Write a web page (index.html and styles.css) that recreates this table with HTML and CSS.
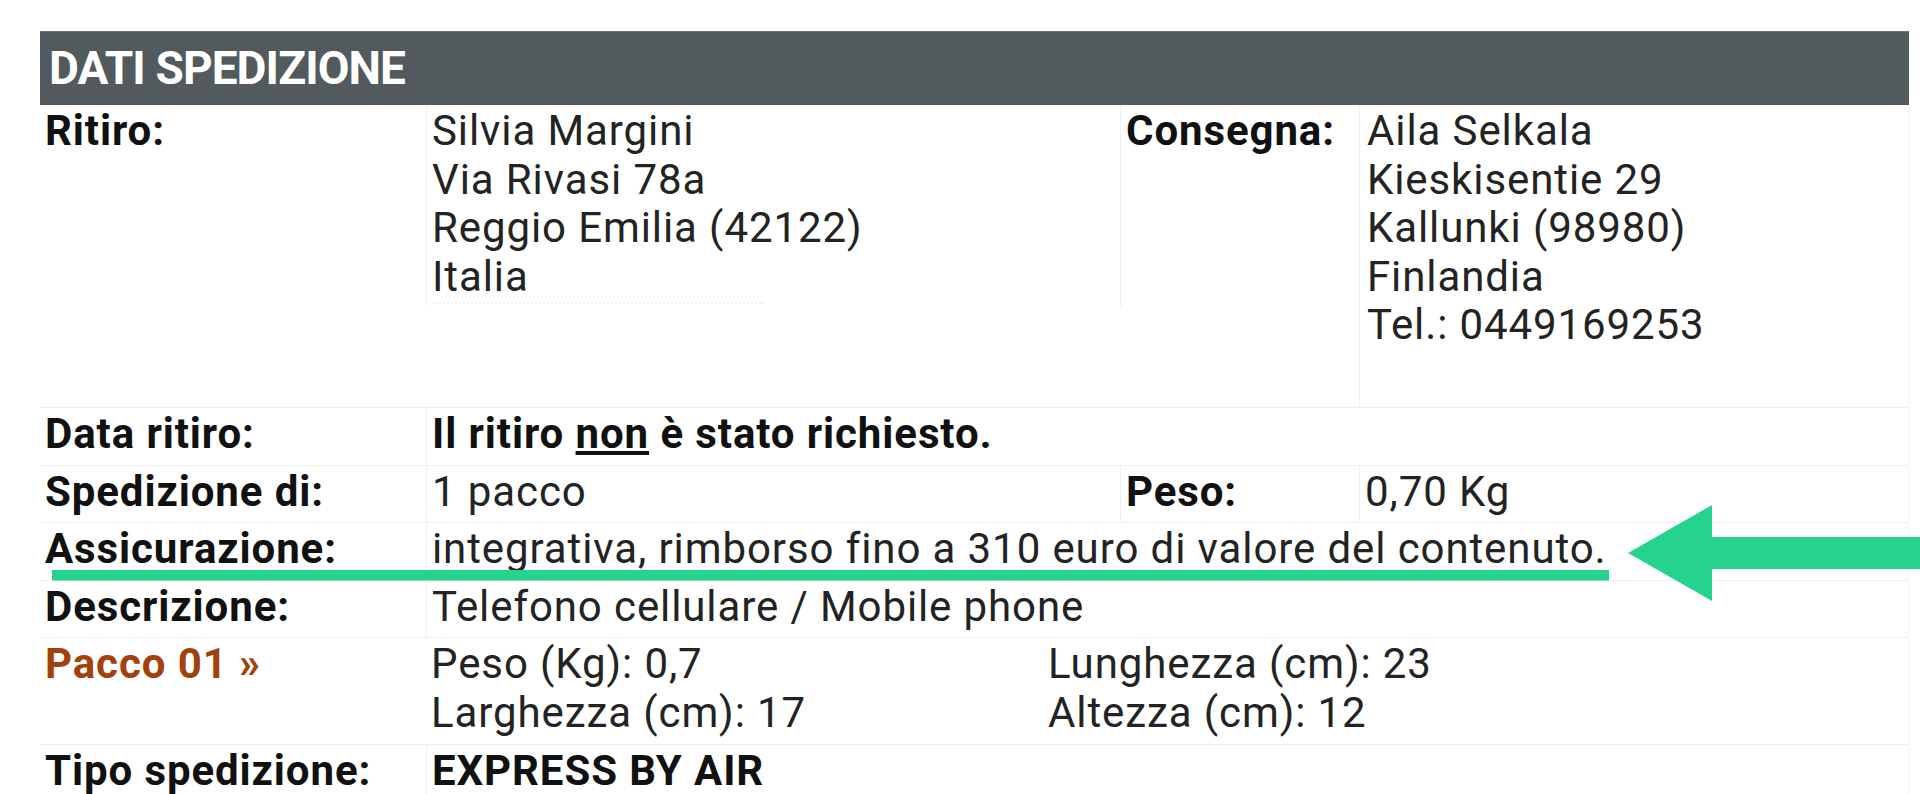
FILE: index.html
```html
<!DOCTYPE html>
<html lang="it">
<head>
<meta charset="utf-8">
<title>Dati spedizione</title>
<link rel="stylesheet" href="styles.css">
</head>
<body>
<div class="page">
  <section class="sheet">
    <h2 class="sheet-head">DATI SPEDIZIONE</h2>

    <div class="row row-addr">
      <div class="cell label span2">Ritiro:</div>
      <div class="cell value bl">
        Silvia Margini<br>
        Via Rivasi 78a<br>
        Reggio Emilia (42122)<br>
        Italia
        <span class="addr-foot"></span>
      </div>
      <div class="cell label bl">Consegna:</div>
      <div class="cell value bl span2 addr-right">
        Aila Selkala<br>
        Kieskisentie 29<br>
        Kallunki (98980)<br>
        Finlandia<br>
        Tel.: 0449169253
      </div>
    </div>

    <div class="row">
      <div class="cell label">Data ritiro:</div>
      <div class="cell value bl wide strong">Il ritiro <u>non</u> è stato richiesto.</div>
    </div>

    <div class="row">
      <div class="cell label">Spedizione di:</div>
      <div class="cell value bl">1 pacco</div>
      <div class="cell label bl">Peso:</div>
      <div class="cell value bl pad-r">0,70 Kg</div>
    </div>

    <div class="row">
      <div class="cell label">Assicurazione:</div>
      <div class="cell value bl wide">integrativa, rimborso fino a 310 euro di valore del contenuto.</div>
    </div>

    <div class="row">
      <div class="cell label">Descrizione:</div>
      <div class="cell value bl wide">Telefono cellulare / Mobile phone</div>
    </div>

    <div class="row">
      <div class="cell label pacco">Pacco 01 »</div>
      <div class="cell value wide">
        <div class="dims">
          <span>Peso (Kg): 0,7</span>
          <span>Lunghezza (cm): 23</span>
          <span>Larghezza (cm): 17</span>
          <span>Altezza (cm): 12</span>
        </div>
      </div>
    </div>

    <div class="row">
      <div class="cell label">Tipo spedizione:</div>
      <div class="cell value bl wide strong">EXPRESS BY AIR</div>
    </div>
  </section>

  <svg class="annot" width="1920" height="794" viewBox="0 0 1920 794" aria-hidden="true">
    <rect x="52" y="570" width="1557" height="10.5" fill="#26d38e"/>
    <polygon points="1628,553 1712,505 1712,537 1920,537 1920,569 1712,569 1712,601" fill="#26d38e"/>
  </svg>
</div>
</body>
</html>
```

FILE: styles.css
```css
html, body {
  margin: 0;
  padding: 0;
  background: #ffffff;
}

body {
  font-family: Roboto, "Liberation Sans", Arial, sans-serif;
  color: #1e1e1e;
}

.page {
  position: relative;
  width: 1920px;
  height: 794px;
  overflow: hidden;
}

.sheet {
  width: 1869px;
  margin: 31px 0 0 40px;
}

.sheet-head {
  box-sizing: border-box;
  height: 74px;
  margin: 0;
  padding: 9px 0 0 9px;
  background: #525a5d;
  color: #ffffff;
  font-size: 46px;
  font-weight: 700;
  line-height: 54px;
  letter-spacing: -0.9px;
  border-top: 1px solid #6e7679;
}

.row {
  display: grid;
  grid-template-columns: 386px 694px 239px 550px;
  border-bottom: 1px solid #eeeeee;
  border-right: 1px solid #f4f1f4;
  font-size: 42px;
  line-height: 48.6px;
  letter-spacing: 0.9px;
}

.row-addr {
  grid-template-rows: auto 1fr;
  align-items: start;
}

.cell {
  padding: 2px 5px 6px 5px;
}

.label {
  font-weight: 700;
  color: #111111;
}

.value {
  font-weight: 400;
  color: #232323;
}

.strong {
  font-weight: 700;
  color: #111111;
}

.bl {
  border-left: 1px solid #f0f0f0;
  align-self: stretch;
}

.row-addr .bl {
  align-self: start;
}

.row-addr .span2 {
  grid-row: 1 / span 2;
}

.row-addr .label.span2 {
  grid-column: 1;
}

.row-addr .value:nth-child(2) {
  padding-bottom: 3px;
}

.addr-foot {
  display: block;
  width: 332px;
  height: 0;
  border-top: 2px dotted #f1f1f1;
  margin-top: 1px;
}

.addr-right {
  grid-column: 4;
  padding-left: 7px;
  padding-bottom: 57px;
}

.row-addr .label.bl {
  grid-column: 3;
  grid-row: 1;
  align-self: stretch;
}

.wide {
  grid-column: 2 / span 3;
}

.pacco {
  color: #a3410d;
}

.dims {
  display: grid;
  grid-template-columns: 617px auto;
}

.annot {
  position: absolute;
  left: 0;
  top: 0;
  pointer-events: none;
}
```
